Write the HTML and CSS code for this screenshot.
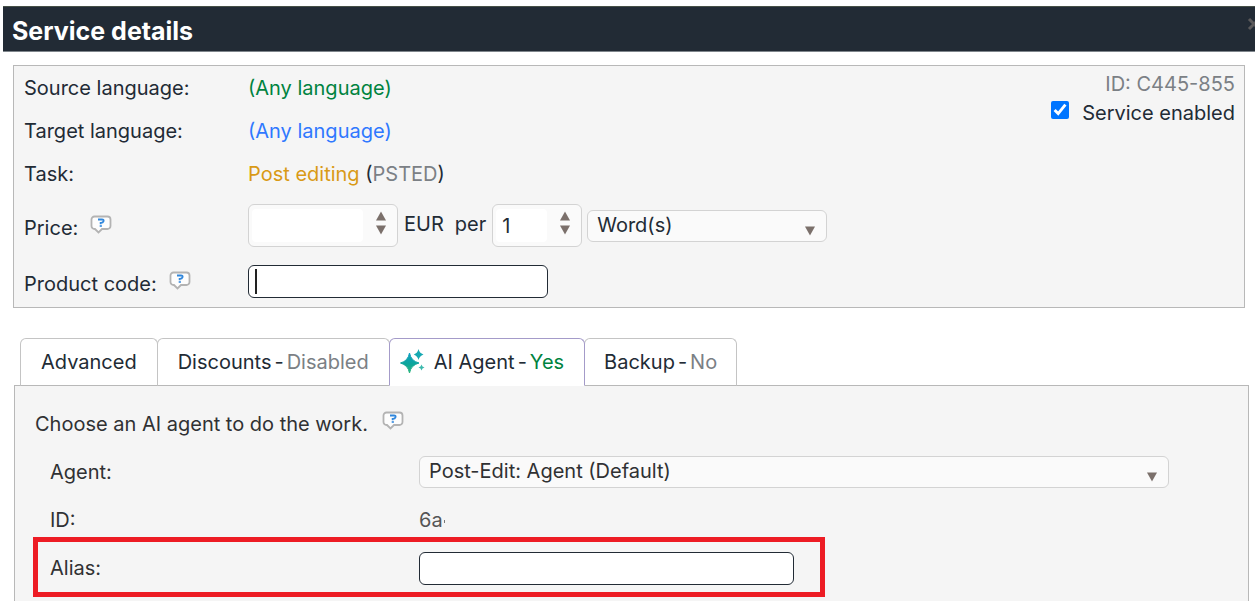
FILE: index.html
```html
<!DOCTYPE html>
<html lang="en">
<head>
<meta charset="utf-8">
<title>Service details</title>
<link rel="stylesheet" href="styles.css">
</head>
<body>
<svg class="defs" aria-hidden="true">
  <defs>
    <linearGradient id="teal" x1="0" y1="0" x2="0" y2="1"><stop offset="0" stop-color="#109fc4"/><stop offset=".55" stop-color="#0da59b"/><stop offset="1" stop-color="#2db67c"/></linearGradient>
    <symbol id="help" viewBox="0 0 22 20">
      <path d="M4.500 1.500h13a3 3 0 0 1 3 3v6.500a3 3 0 0 1-3 3h-5.500l-3.500 3.500-3.500-3.500h-.5a3 3 0 0 1-3-3v-6.500a3 3 0 0 1 3-3z" fill="#fdfdfd" stroke="#b3b3b3" stroke-width="1.800"/>
      <path d="M8 4.500h4q2 0 1.500 1.700t-2.800 1.700v1.300" fill="none" stroke="#3187dc" stroke-width="1.900"/>
      <path d="M9.700 10.200h2.200v1.600h-2.200z" fill="#3187dc"/>
    </symbol>
    <symbol id="up" viewBox="0 0 12 10"><path d="M6 0.500 11 9.500H1z" fill="#7b706b"/></symbol>
    <symbol id="down" viewBox="0 0 12 10"><path d="M1 .5h10L6 9.500z" fill="#7b706b"/></symbol>
  </defs>
</svg>
<header class="titlebar">
  <h1 class="title">Service details</h1>
  <button class="close" type="button" aria-label="Close"><svg viewBox="0 0 14 14"><path d="M2 2l10 10M12 2L2 12" stroke="#5b5a5b" stroke-width="3"/></svg></button>
</header>
<main>
  <section class="summary">
    <div class="fields">
      <div class="row"><span class="label">Source language:</span><span class="green">(Any language)</span></div>
      <div class="row"><span class="label">Target language:</span><span class="blue">(Any language)</span></div>
      <div class="row"><span class="label">Task:</span><span><span class="amber">Post editing</span> (<span class="gray">PSTED</span>)</span></div>
      <div class="row row-price">
        <span class="label"><label for="price">Price:</label><svg class="help"><use href="#help"/></svg></span>
        <div class="price">
          <span class="spinner spinner-wide"><input id="price" type="text" inputmode="decimal"><span class="steps"><button type="button" aria-label="Increase price"><svg><use href="#up"/></svg></button><button type="button" aria-label="Decrease price"><svg><use href="#down"/></svg></button></span></span>
          <span class="unit"><span>EUR</span><label for="qty">per</label></span>
          <span class="spinner"><input id="qty" type="text" inputmode="numeric" value="1"><span class="steps"><button type="button" aria-label="Increase quantity"><svg><use href="#up"/></svg></button><button type="button" aria-label="Decrease quantity"><svg><use href="#down"/></svg></button></span></span>
          <span class="select select-unit"><select aria-label="Unit"><option>Word(s)</option></select><svg><use href="#down"/></svg></span>
        </div>
      </div>
      <div class="row row-code">
        <span class="label"><label for="code">Product code:</label><svg class="help"><use href="#help"/></svg></span>
        <input class="text code" id="code" type="text">
      </div>
    </div>
    <div class="meta">
      <span class="gray">ID: C445-855</span>
      <label class="enabled"><input type="checkbox" checked>Service enabled</label>
    </div>
  </section>
  <nav class="tabs">
    <button class="tab" type="button">Advanced</button>
    <button class="tab" type="button">Discounts<span>-</span><span class="gray">Disabled</span></button>
    <button class="tab tab-active" type="button"><svg class="spark" viewBox="0 0 26 26"><path d="M9.500 4Q11 12 19 14Q11 16 9.500 24Q8 16 .5 14Q8 12 9.500 4z" fill="url(#teal)" stroke="url(#teal)"/><path d="M18.500 0Q19.300 4 23.500 5.500Q19.300 7 18.500 11Q17.700 7 13.800 5.500Q17.700 4 18.500 0z" fill="#16a9b2"/><path d="M21.500 15.500l1 2 2 1-2 1-1 2-1-2-2-1 2-1z" fill="#3bb9ad"/></svg>AI Agent<span>-</span><span class="green">Yes</span></button>
    <button class="tab" type="button">Backup<span>-</span><span class="gray">No</span></button>
  </nav>
  <section class="agent">
    <p class="intro">Choose an AI agent to do the work.<svg class="help"><use href="#help"/></svg></p>
    <div class="arow"><label for="agent">Agent:</label><span class="select select-agent"><select id="agent"><option>Post-Edit: Agent (Default)</option></select><svg><use href="#down"/></svg></span></div>
    <div class="arow"><span>ID:</span><span class="idvalue">6a</span></div>
    <div class="arow marked"><label for="alias">Alias:</label><input class="text alias" id="alias" type="text"></div>
  </section>
</main>
</body>
</html>
```
FILE: styles.css
```css
*, *::after { box-sizing: border-box; }
body {
  margin: 0;
  padding: 6px 0 8px;
  background: #fff;
  color: #222b35;
  font: 20px/28px Inter, "Liberation Sans", sans-serif;
  overflow-x: hidden;
}
input, select, button { font: inherit; color: inherit; margin: 0; }
button { padding: 0; border: 0; background: none; }
.defs { position: absolute; width: 0; height: 0; }
.green { color: #00833f; }
.blue { color: #2f78ff; }
.amber { color: #d99a16; }
.gray { color: #7b8085; }

.titlebar {
  display: flex;
  justify-content: space-between;
  align-items: center;
  height: 46px;
  margin-left: 3px;
  padding-left: 9px;
  background: #222b35;
  border-top: 1px solid #465047;
  border-bottom: 1px solid #7f868c;
  overflow: hidden;
}
.title { margin: 0; padding-top: 4px; color: #fff; font-size: 25px; font-weight: 700; }
.close { width: 14px; height: 14px; margin: 0 -6px 10px 0; }
.close svg { display: block; width: 14px; height: 14px; }

.summary {
  display: flex;
  justify-content: space-between;
  margin: 13px 10px 0 13px;
  padding-left: 10px;
  background: #f5f5f5;
  border: 1px solid #b8b8b8;
}
.row { display: grid; grid-template-columns: 224px auto; align-items: center; min-height: 43px; }
.row-price { min-height: 61px; }
.row-code { min-height: 51px; }
.label { display: flex; gap: 12px; }
.row-price .label, .row-code .label { padding-top: 4px; }
.help { width: 22px; height: 20px; flex: none; margin-top: 1px; }
.price { display: flex; align-items: center; }
.spinner {
  display: flex;
  width: 90px;
  height: 43px;
  padding: 4px 10px 4px 3px;
  background: #fafafa;
  border: 1px solid #d3d3d3;
  border-radius: 6px;
}
.spinner-wide { width: 150px; }
.spinner input { flex: 1; min-width: 0; margin-right: 12px; padding: 0 0 0 6px; border: 0; border-radius: 4px; background: #fff; outline: 0; }
.steps { display: flex; flex-direction: column; gap: 4px; padding-top: 2px; }
.steps button, .steps svg, .select svg { display: block; width: 12px; height: 10px; }
.unit { display: flex; gap: 11px; padding: 0 6px; margin-top: -4px; }
.select { position: relative; display: block; }
.select select {
  display: block;
  width: 100%;
  height: 32px;
  padding: 0 30px 3px 9px;
  appearance: none;
  background: #fafafa;
  border: 1px solid #d3d3d3;
  border-radius: 6px;
}
.select svg { position: absolute; right: 11px; bottom: 6px; pointer-events: none; }
.select-unit { width: 240px; margin-left: 5px; }
.select-agent { width: 750px; }
.text { height: 33px; padding: 0 8px; background: #fff; border: 1px solid #222b35; border-radius: 6px; outline: 0; }
.code { width: 300px; background: linear-gradient(#222, #222) 6px 3px / 2px 25px no-repeat #fff; }
.alias { width: 375px; }
.meta { display: flex; flex-direction: column; align-items: flex-end; gap: 1px; padding: 4px 9px 0 0; }
.enabled { display: flex; align-items: center; gap: 13px; }
.enabled input { width: 18px; height: 18px; margin-bottom: 6px; accent-color: #0075ff; }

.tabs { display: flex; margin: 30px 0 0 20px; }
.tab {
  display: flex;
  align-items: center;
  gap: 3px;
  height: 48px;
  padding: 0 20px;
  margin-right: -1px;
  background: #fff;
  border: 1px solid #c4c4c4;
  border-bottom-color: #b8b8b8;
  border-radius: 6px 6px 0 0;
}
.tab:last-child { padding: 0 19px; }
.tab-active { z-index: 1; padding-left: 10px; border-color: #a49bc9; border-bottom-color: #fff; }
.spark { width: 26px; height: 26px; margin-right: 5px; }

.agent {
  margin: -1px 6px 0 14px;
  padding: 14px 20px 9px;
  background: #f5f5f5;
  border: 1px solid #b8b8b8;
  border-bottom: 0;
  color: #303133;
}
.intro { display: flex; gap: 14px; height: 48px; margin: 0; padding-top: 10px; }
.arow { display: grid; grid-template-columns: 369px auto; justify-content: start; align-items: center; height: 48px; padding-left: 15px; position: relative; }
.idvalue { color: #555; }
.idvalue::after { content: ""; display: inline-block; width: 1px; height: 3px; margin-left: 1px; vertical-align: 4px; background: #777; }
.marked::after { content: ""; position: absolute; top: -7px; bottom: -5px; left: -2px; width: 792px; border: 5px solid #ed1c24; pointer-events: none; }
```
